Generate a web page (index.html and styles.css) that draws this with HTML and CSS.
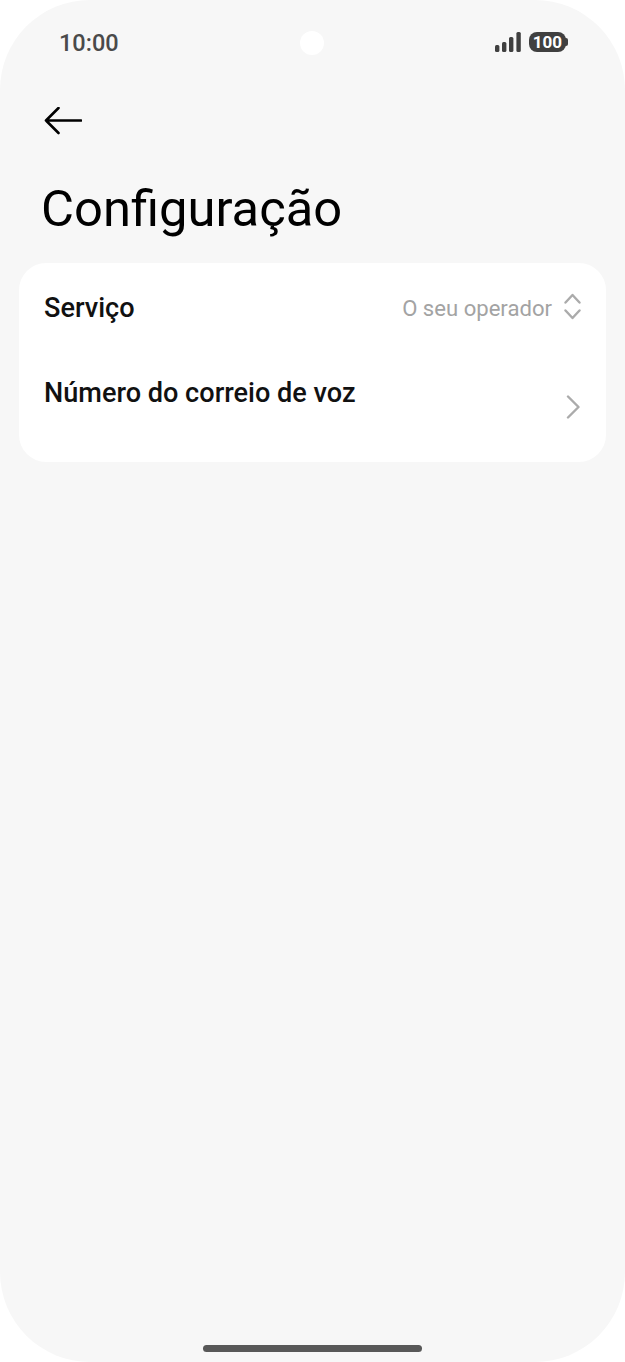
FILE: index.html
```html
<!DOCTYPE html>
<html lang="pt">
  <head>
    <meta charset="UTF-8" />
    <meta name="viewport" content="width=device-width, initial-scale=1.0" />
    <title>Configuração</title>
    <link rel="stylesheet" href="styles.css">
  </head>
  <body>
    <div class="phone">
      <div class="status-bar">
        <span class="clock">10:00</span>
        <span class="camera"></span>
        <div class="status-icons">
          <svg class="signal" width="26" height="20" viewBox="0 0 26 20">
            <rect x="0" y="13" width="4.4" height="7" rx="1.5" />
            <rect x="7" y="10" width="4.4" height="10" rx="1.5" />
            <rect x="14" y="5" width="4.4" height="15" rx="1.5" />
            <rect x="21.4" y="0" width="4.4" height="20" rx="1.5" />
          </svg>
          <div class="battery"><span class="battery-level">100</span></div>
        </div>
      </div>

      <button class="back" type="button" aria-label="Voltar">
        <svg width="38" height="28" viewBox="0 0 38 28">
          <path d="M37 13.5H2M14.5 1L2 13.5L14.5 26" />
        </svg>
      </button>

      <h1 class="title">Configuração</h1>

      <div class="card">
        <div class="row row-service">
          <span class="row-label">Serviço</span>
          <div class="row-value">
            <span>O seu operador</span>
            <svg class="updown" width="17" height="27" viewBox="0 0 17 27">
              <path d="M1.5 9.5L8.5 2L15.5 9.5M1.5 17.5L8.5 25L15.5 17.5" />
            </svg>
          </div>
        </div>
        <div class="row row-voicemail">
          <span class="row-label">Número do correio de voz</span>
          <svg class="chevron" width="14" height="24" viewBox="0 0 14 24">
            <path d="M2 1.5L12.5 12L2 22.5" />
          </svg>
        </div>
      </div>

      <div class="home-bar"></div>
    </div>
  </body>
</html>
```

FILE: styles.css
```css
* {
  box-sizing: border-box;
}
body {
  margin: 0;
  background-color: #ffffff;
  font-family: Roboto, "Liberation Sans", sans-serif;
}
.phone {
  position: relative;
  display: flex;
  flex-direction: column;
  width: 625px;
  height: 1362px;
  overflow: hidden;
  background-color: #f7f7f7;
  border-radius: 90px;
}
.status-bar {
  display: flex;
  justify-content: space-between;
  align-items: center;
  height: 32px;
  margin-top: 27px;
  padding: 0 59px 0 59px;
}
.clock {
  font-size: 23.5px;
  font-weight: 500;
  color: #4a4a4a;
}
.camera {
  position: absolute;
  top: 31px;
  left: 300px;
  width: 24px;
  height: 24px;
  border-radius: 50%;
  background-color: #ffffff;
}
.status-icons {
  display: flex;
  align-items: center;
  gap: 8px;
  margin-bottom: 2px;
}
.signal {
  fill: #404040;
}
.battery {
  position: relative;
  width: 37px;
  height: 20px;
  border-radius: 8px;
  background-color: #404040;
  text-align: center;
}
.battery::after {
  content: "";
  position: absolute;
  top: 6px;
  right: -2px;
  width: 3px;
  height: 8px;
  border-radius: 0 2px 2px 0;
  background-color: #404040;
}
.battery-level {
  display: block;
  font-size: 17px;
  font-weight: 700;
  line-height: 20px;
  color: #ffffff;
}
.back {
  align-self: flex-start;
  display: flex;
  margin: 48px 0 0 44px;
  padding: 0;
  border: none;
  background: none;
}
.back path {
  fill: none;
  stroke: #000000;
  stroke-width: 2.6;
  stroke-linecap: round;
  stroke-linejoin: round;
}
.title {
  margin: 43px 0 0 41px;
  font-size: 50.7px;
  font-weight: 400;
  line-height: 62px;
  color: #000000;
}
.card {
  margin: 23px 19px 0;
  height: 199px;
  padding: 0 25px;
  border-radius: 27px;
  background-color: #ffffff;
}
.row {
  display: flex;
  justify-content: space-between;
}
.row-service {
  align-items: center;
  height: 90px;
}
.row-voicemail {
  align-items: flex-start;
  padding-top: 22px;
}
.row-label {
  font-size: 27.1px;
  font-weight: 500;
  line-height: 36px;
  color: #111111;
}
.row-value {
  display: flex;
  align-items: center;
  gap: 12px;
  font-size: 22.1px;
  color: #a3a3a3;
}
.updown {
  margin-bottom: 3px;
}
.updown path,
.chevron path {
  fill: none;
  stroke: #ababab;
  stroke-width: 2.4;
  stroke-linecap: round;
  stroke-linejoin: round;
}
.chevron {
  margin-top: 20px;
  margin-right: 1px;
}
.home-bar {
  position: absolute;
  left: 203px;
  bottom: 10px;
  width: 219px;
  height: 7px;
  border-radius: 4px;
  background-color: #585858;
}
```
